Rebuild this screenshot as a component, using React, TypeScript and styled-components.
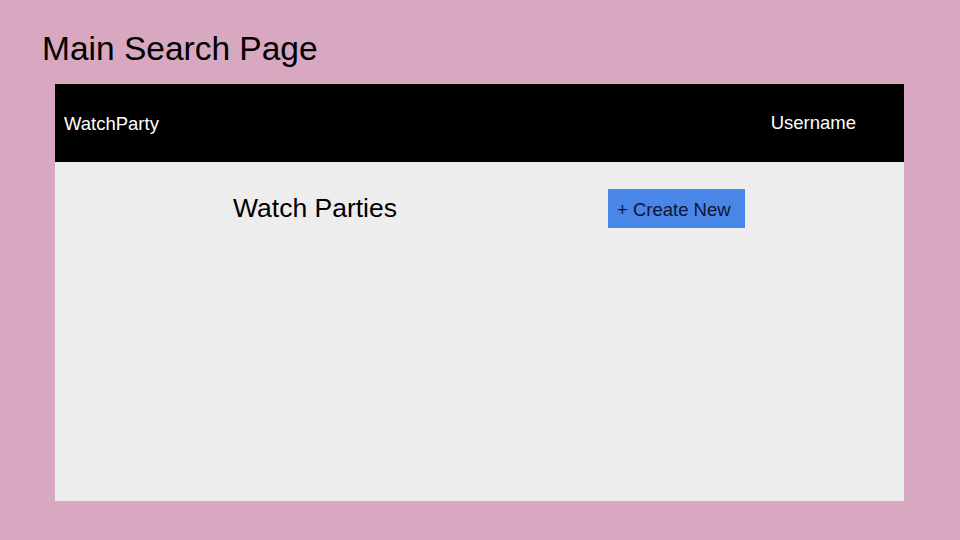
import styled, { createGlobalStyle } from "styled-components";

const GlobalStyle = createGlobalStyle`
    html, body {
        margin: 0;
        padding: 0;
        background: #d8a7c0;
        font-family: "Liberation Sans", Arial, sans-serif;
    }
`;

const Page = styled.div`
    width: 960px;
    height: 540px;
    background: #d8a7c0;
    padding: 29px 0 0 0;
    box-sizing: border-box;
`;

const PageTitle = styled.h1`
    margin: 0 0 0 42px;
    font-size: 33.5px;
    font-weight: normal;
    color: #000;
    line-height: 40px;
`;

const Panel = styled.div`
    margin: 15px 0 0 55px;
    width: 849px;
    height: 417px;
    background: #ededed;
    display: flex;
    flex-direction: column;
`;

const Header = styled.div`
    height: 78px;
    background: #000;
    color: #fff;
    display: flex;
    align-items: center;
    justify-content: space-between;
    padding: 0 48px 0 9px;
    font-size: 18.5px;
`;

const Brand = styled.span`
    margin-top: 2px;
`;

const User = styled.span`
    margin-top: 0;
`;

const Body = styled.div`
    padding: 27px 0 0 178px;
    display: grid;
    grid-template-columns: 375px auto;
    align-items: center;
    justify-content: start;
`;

const SectionTitle = styled.h2`
    margin: 0;
    font-size: 26.5px;
    font-weight: normal;
    color: #000;
`;

const CreateButton = styled.button`
    width: 137px;
    height: 39px;
    background: #4a86e8;
    border: none;
    color: #0b1630;
    font-family: "Liberation Sans", Arial, sans-serif;
    font-size: 18.5px;
    text-align: left;
    padding: 2px 0 0 9px;
`;

const App = () => {
    return (
        <>
            <GlobalStyle />
            <Page>
                <PageTitle>Main Search Page</PageTitle>
                <Panel>
                    <Header>
                        <Brand>WatchParty</Brand>
                        <User>Username</User>
                    </Header>
                    <Body>
                        <SectionTitle>Watch Parties</SectionTitle>
                        <CreateButton>+ Create New</CreateButton>
                    </Body>
                </Panel>
            </Page>
        </>
    );
};

export default App;
